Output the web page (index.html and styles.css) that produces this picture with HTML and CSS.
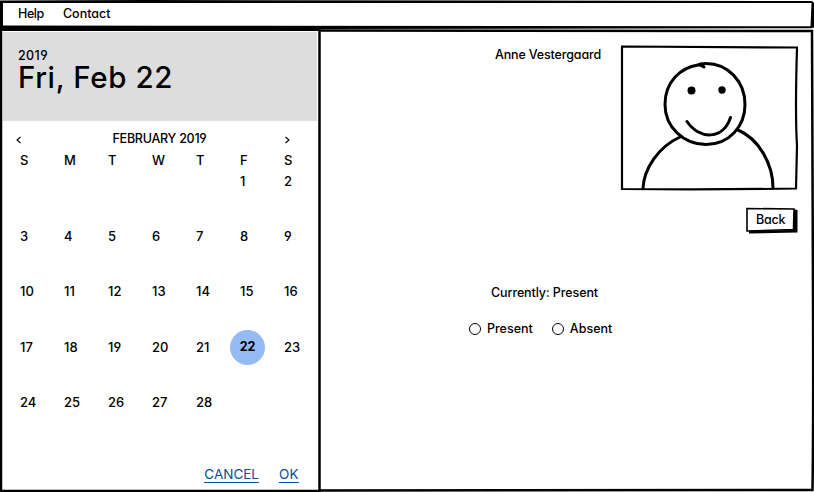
FILE: index.html
```html
<!DOCTYPE html>
<html lang="en">
<head>
<meta charset="utf-8">
<title>Attendance</title>
<link rel="stylesheet" href="styles.css">
</head>
<body>
<div class="app">
  <header class="menu"><a class="help">Help</a><a class="contact">Contact</a></header>
  <main class="main">
    <section class="picker">
      <div class="heading"><div class="year">2019</div><div class="date">Fri, Feb 22</div></div>
      <div class="month">
        <svg class="arrow" viewBox="0 0 5 8"><path d="M4.500 1 1 4l3.500 3"/></svg>
        <span class="month-name">FEBRUARY 2019</span>
        <svg class="arrow" viewBox="0 0 5 8"><path d="m.5 1 3.500 3-3.500 3"/></svg>
      </div>
      <div class="days">
        <span>S</span><span>M</span><span>T</span><span>W</span><span>T</span><span>F</span><span>S</span>
        <span></span><span></span><span></span><span></span><span></span><span>1</span><span>2</span>
        <span>3</span><span>4</span><span>5</span><span>6</span><span>7</span><span>8</span><span>9</span>
        <span>10</span><span>11</span><span>12</span><span>13</span><span>14</span><span>15</span><span>16</span>
        <span>17</span><span>18</span><span>19</span><span>20</span><span>21</span><span class="selected">22</span><span>23</span>
        <span>24</span><span>25</span><span>26</span><span>27</span><span>28</span>
      </div>
      <div class="actions"><a class="cancel">CANCEL</a><a class="ok">OK</a></div>
    </section>
    <section class="details">
      <div class="profile">
        <span class="name">Anne Vestergaard</span>
        <svg class="photo" viewBox="0 0 180 148">
          <path class="edge" d="M3 3.500 Q90 4 178 4.500 Q176 70 178 103L177 145.500Q90 147 3 146Z"/>
          <g class="person">
            <path d="M85 24Q82 21.500 79 22C62 24.500 46 38.500 46 61.500C46 84.500 65 101.500 87 101.500C110 101.500 126 83.500 126 61.500C126 38.500 109 20.500 87 20.500Q81 20.500 77 22.500"/>
            <path d="M24 145C25 126 39 104 61 94M119 87C140 96 154 121 154 145M68 78.500C80 96.500 104 97.500 111.500 74.500"/>
            <circle cx="72.500" cy="47.500" r="2.500"/><circle cx="103" cy="47" r="2.200"/>
          </g>
        </svg>
      </div>
      <div class="back-row"><a class="back">
        <svg class="back-art" viewBox="0 0 56 30"><path d="m6 25 44-1V3l4.500 1v22.500L6 27.500z" fill="#000"/><path d="m4 2.500 47 .5-.5 20.500L4 25z" fill="#fff" stroke="#000" stroke-width="1.600"/></svg>
        <span>Back</span></a></div>
      <p class="status">Currently: Present</p>
      <div class="choices">
        <label class="choice"><i class="radio"></i><span class="present">Present</span></label>
        <label class="choice"><i class="radio"></i><span class="absent">Absent</span></label>
      </div>
    </section>
  </main>
  <svg class="frame" viewBox="0 0 814 492">
    <path class="fill" d="M0 .5 145 0 812 1 814 3V27.500L811 28.300 321 29V31H0ZM3 3V25.500L170 25.800 810.500 26.300 811.500 3Z" fill-rule="evenodd"/>
    <path class="line" d="M320 30.500 812 31Q812.500 180 813 300T812.500 490L320 490.500"/>
    <path class="line" d="M1 28V491H319.500V29"/>
  </svg>
</div>
</body>
</html>
```
FILE: styles.css
```css
* { box-sizing: border-box; }
body {
  margin: 0;
  background: #fff;
  color: #000;
  font: 500 13px/16px Inter, "Liberation Sans", sans-serif;
  font-feature-settings: "cv11", "cv04", "calt" 0;
}
.app { position: relative; width: 814px; height: 492px; overflow: hidden; }
.frame { position: absolute; inset: 0; width: 814px; height: 492px; pointer-events: none; }
.frame .line { fill: none; stroke: #000; stroke-width: 2.5; }
.menu { display: flex; gap: 19px; height: 28px; padding: 6px 18px 0; font-size: 12.5px; }
.help { letter-spacing: -.4px; }
.main { display: flex; height: 464px; }
.picker { width: 318px; padding: 4px 0 0 3px; }
.heading { width: 314px; height: 89px; padding: 17px 15px 0; background: #ddd; }
.year { height: 14px; line-height: 13px; font-size: 12.5px; letter-spacing: .4px; }
.date { font-size: 29.5px; line-height: 28px; font-weight: 450; letter-spacing: .6px; white-space: nowrap; }
.month { display: flex; align-items: center; justify-content: space-between; width: 274px; height: 22px; margin: 6px 0 0 13px; }
.month-name { margin-left: 13px; padding-top: 2px; font-size: 12.5px; letter-spacing: -.25px; }
.arrow { width: 5px; height: 8px; fill: none; stroke: #000; stroke-width: 1.1; position: relative; top: 2px; }
.days {
  display: grid;
  grid-template-columns: repeat(7, 44px);
  grid-template-rows: 21px 21px repeat(4, 55.2px);
  align-items: end;
  width: 308px;
  margin: -2px 0 0 17px;
}
.days span { line-height: 16px; }
.days .selected {
  display: grid;
  place-items: center;
  width: 35px;
  height: 35px;
  margin: 0 0 -10px -10px;
  border-radius: 50%;
  background: #94bbf3;
  font-weight: 700;
  font-size: 12.5px;
}
.actions { display: flex; justify-content: flex-end; gap: 20px; padding-right: 19px; margin-top: 57px; color: #0f4c92; font-weight: 400; font-size: 13.5px; }
.actions a { border-bottom: 1px solid #0f4c92; line-height: 15px; }
.ok { letter-spacing: .3px; }
.details { flex: 1; padding: 15px 15px 0 0; }
.profile { display: flex; justify-content: flex-end; gap: 18px; }
.name { padding-top: 4px; font-size: 12.5px; letter-spacing: -.15px; }
.photo { width: 180px; height: 148px; fill: none; stroke: #000; stroke-width: 2.2; stroke-linecap: round; }
.person { stroke-width: 3; }
.person circle { fill: #000; }
.back-row { display: flex; justify-content: flex-end; margin-top: 15px; }
.back { display: grid; width: 56px; height: 30px; }
.back > * { grid-area: 1 / 1; }
.back span { padding: 6px 0 0 13px; font-size: 12.5px; letter-spacing: -.2px; }
.back-art { width: 56px; height: 30px; }
.status { width: 120px; margin: 49px 0 0 173px; font-size: 12.5px; letter-spacing: -.1px; white-space: nowrap; }
.choices { display: flex; gap: 19px; margin: 20px 0 0 151px; font-size: 12.5px; }
.choice { display: flex; align-items: center; gap: 6px; }
.radio { width: 12px; height: 12px; border: 1.5px solid #000; border-radius: 50%; }
```
